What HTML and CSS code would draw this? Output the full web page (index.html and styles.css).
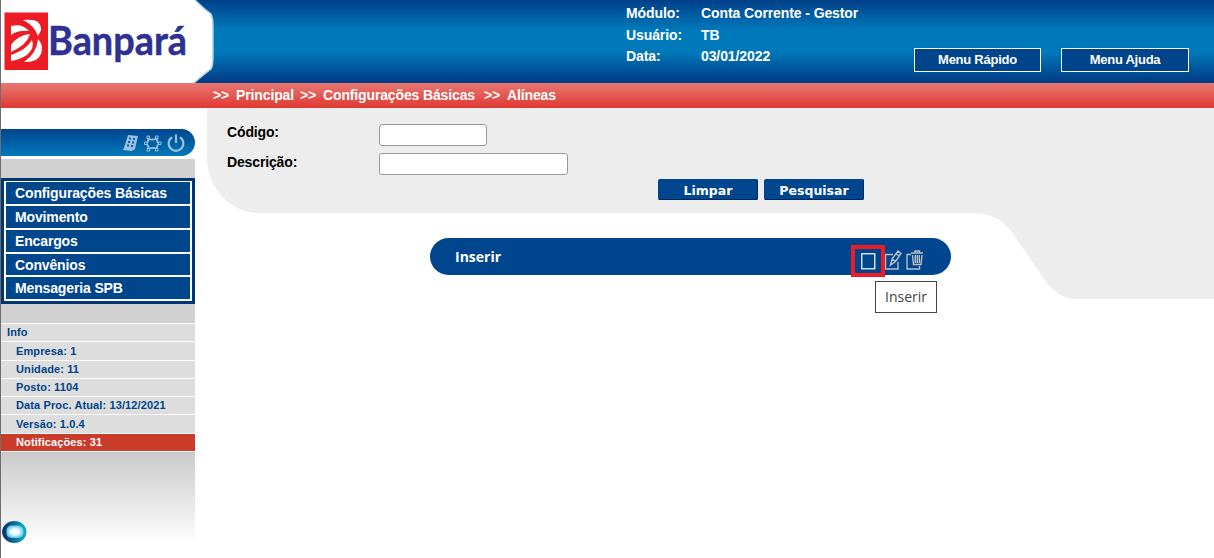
FILE: index.html
```html
<!DOCTYPE html>
<html lang="pt-BR">
<head>
<meta charset="utf-8">
<title>Banpará - Conta Corrente</title>
<link rel="stylesheet" href="styles.css">
</head>
<body>
<div class="page">
  <header class="header">
    <svg class="logo" width="216" height="83" viewBox="0 0 216 83">
      <path d="M0 0H195Q203 8 211 14Q213 18 213 26V57Q213 66 211 69Q203 75 194 83H0Z" fill="#fff"/>
      <path d="M195 0Q203 8 211 14Q213 18 213 26V57Q213 66 211 69Q203 75 194 83" fill="none" stroke="#a9cfea" stroke-width="1.500"/>
      <rect x="4.500" y="12.500" width="43.500" height="57.500" fill="#ed1c24"/>
      <path d="M23 20Q34 19 38 22Q44 28 38 36Q34 25 23 20Z" fill="#fff"/>
      <path d="M11 26Q22 23 29 31Q18 30 11 35Z" fill="#fff"/>
      <path d="M11 45Q18 35 30 34Q27 45 11 52Z" fill="#fff"/>
      <path d="M11 55Q26 50 32 40Q35 48 27 55Q19 60 11 61Z" fill="#fff"/>
      <path d="M38 39Q44 45 41 54Q37 63 24 62Q37 53 38 39Z" fill="#fff"/>
      <text class="logo-text" x="48" y="54.800" textLength="139" lengthAdjust="spacingAndGlyphs">Banpará</text>
    </svg>
    <dl class="session">
      <dt>Módulo:</dt><dd>Conta Corrente - Gestor</dd>
      <dt>Usuário:</dt><dd>TB</dd>
      <dt>Data:</dt><dd>03/01/2022</dd>
    </dl>
    <nav class="quick">
      <a class="quick-link">Menu Rápido</a>
      <a class="quick-link quick-help">Menu Ajuda</a>
    </nav>
  </header>
  <nav class="crumbs"><span>&gt;&gt;</span><span class="c-main">Principal</span><span class="c-sep">&gt;&gt;</span><span class="c-item">Configurações Básicas</span><span class="c-sep2">&gt;&gt;</span><span class="c-item">Alíneas</span></nav>
  <div class="body">
    <aside class="sidebar">
      <div class="toolbar">
        <svg width="64" height="21" viewBox="0 0 64 21" fill="none" stroke="#9bbfe0">
          <path d="M6 2L16 3L13 16L10 18L1 17L3 12Z" fill="#9bbfe0" stroke="none"/>
          <path d="M7 5.500h2M11 6h2M6 9h2M10 9.500h2M5 12.500h2M9 13h2" stroke="#0a62a8" stroke-width="1.800"/>
          <path d="M26 6Q30.500 7.500 35 5.500Q34.500 9 37 10.500Q34.500 12.500 35 15.500Q30.500 14 26.500 16Q27 12.500 24 10.500Q27 9 26 6Z" stroke-width="1.600"/>
          <path d="M25 3h2.500v2.500h-2.500zM33.500 3h2.500v2.500h-2.500zM22.500 9h2.500v2.500h-2.500zM36.500 9h2.500v2.500h-2.500zM25 15.500h2.500v2.500h-2.500zM33.500 15.500h2.500v2.500h-2.500z" fill="#0766aa" stroke-width="1"/>
          <path d="M50 4.200A7.400 7.400 0 1 0 58 4.200M54 1.500V10" stroke-width="2.200"/>
        </svg>
      </div>
      <div class="band"></div>
      <nav class="menu">
        <a>Configurações Básicas</a>
        <a>Movimento</a>
        <a>Encargos</a>
        <a>Convênios</a>
        <a>Mensageria SPB</a>
      </nav>
      <div class="band"></div>
      <ul class="info">
        <li class="info-title">Info</li>
        <li class="low">Empresa: 1</li>
        <li>Unidade: 11</li>
        <li>Posto: 1104</li>
        <li>Data Proc. Atual: 13/12/2021</li>
        <li class="low">Versão: 1.0.4</li>
        <li class="alert">Notificações: 31</li>
      </ul>
      <div class="fade">
        <svg width="26" height="26" viewBox="0 0 26 26">
          <defs>
            <linearGradient id="orb"><stop offset="0" stop-color="#0a2a66"/><stop offset=".5" stop-color="#08709f"/><stop offset="1" stop-color="#0db2cf"/></linearGradient>
            <radialGradient id="glow"><stop offset="0" stop-color="#fff"/><stop offset=".5" stop-color="#e6f8fb"/><stop offset="1" stop-color="#63cbe0"/></radialGradient>
          </defs>
          <ellipse cx="13.300" cy="12" rx="12.200" ry="11" fill="url(#orb)"/>
          <rect x="5.500" y="5.500" width="17" height="12.500" rx="5" fill="url(#glow)"/>
        </svg>
      </div>
    </aside>
    <main class="main">
      <svg class="shape" width="1007" height="191" viewBox="0 0 1007 191"><path d="M0 0H1007V191H865Q848 188 835 168L805 124Q790 105 768 105H52C22 105 0 78 0 50Z" fill="#ededed"/></svg>
      <form class="search">
        <label>Código:</label><input class="in-code" type="text">
        <label class="second">Descrição:</label><input class="in-desc" type="text">
      </form>
      <div class="actions"><button type="button">Limpar</button><button type="button">Pesquisar</button></div>
      <div class="insert">
        <span>Inserir</span>
        <svg class="tools" width="76" height="32" viewBox="0 0 76 32" fill="none" stroke="#b9bec9" stroke-width="1.400">
          <path d="M42 9.500H34.500V24H47V17M39.500 20L41 14L47 6L50 8.500L44.500 16.500ZM41 14L44.500 16.500M45 8.500L48 11"/>
          <path d="M60 9.500H56V24H68.500V21"/>
          <path d="M60 8H72M64 8V6H68.500V8M61.500 10L62.500 19.500H70L71 10M64.300 10V18M66.300 10V18M68.300 10V18"/>
          <rect x="2" y="2" width="30" height="28" stroke="#ed1c24" stroke-width="4"/>
          <rect x="10.750" y="8.750" width="13" height="15" stroke="#e2e5ec"/>
        </svg>
        <div class="tip">Inserir</div>
      </div>
    </main>
  </div>
</div>
</body>
</html>
```
FILE: styles.css
```css
* { box-sizing: border-box; }
body { margin: 0; background: #fff; font: bold 14px/20px "Liberation Sans", Arial, sans-serif; }
.page { width: 1214px; height: 558px; overflow: hidden; border-left: 1px solid #6d6d6d; }
.header { display: flex; height: 83px; margin-left: -1px; color: #fff; background: linear-gradient(#003f88 0, #0079ba 36%, #0079ba 62%, #003f88 97%); }
.logo { flex: none; }
.logo-text { font: bold 40.5px Lato, sans-serif; fill: #2e3192; stroke: #2e3192; stroke-width: 0.5px; }
.session { display: grid; grid-template-columns: 75px 175px; grid-template-rows: 22px 21px 21px; margin: 3px 0 0 410px; align-content: start; letter-spacing: -0.1px; }
.session dd { margin: 0; }
.quick { display: flex; gap: 20px; margin: 48px 0 0 38px; }
.quick-link { width: 127px; height: 24px; border: 1px solid #fff; background: #00458c; text-align: center; font-size: 13px; line-height: 21px; letter-spacing: -0.25px; }
.quick-help { width: 128px; }
.crumbs { display: flex; height: 25px; padding-left: 212px; color: #fff; line-height: 24px; letter-spacing: -0.14px; background: linear-gradient(#e87772, #df3931); }
.c-main { margin-left: 7px; }
.c-sep { margin-left: 6px; }
.c-item { margin-left: 7px; }
.c-sep2 { margin-left: 9px; }
.body { display: grid; grid-template-columns: 194px 1007px; column-gap: 12px; }
.toolbar { display: flex; justify-content: flex-end; height: 27px; margin: 21px 0 3px; padding: 4px 9px 0 0; border-radius: 0 14px 14px 0; background: linear-gradient(#00458f, #0078b9); }
.band { height: 19px; background: #d1d1d1; }
.menu { display: grid; grid-template-rows: 22px 22px 22px 21px 22px; gap: 2px; height: 126px; padding: 4px 5px; color: #fff; letter-spacing: -0.14px; background: linear-gradient(#fff, #fff) 3px 3px / 188px 120px no-repeat #003673; }
.menu a { padding-left: 9px; line-height: 22px; background: #00468d; }
.info { margin: 0; padding: 0; list-style: none; font-size: 11px; color: #00438b; letter-spacing: 0.12px; }
.info li { height: 18.25px; padding-left: 15px; border-top: 1px solid #fff; line-height: 17.5px; background: #ddd; }
.info .low { line-height: 19px; }
.info .info-title { padding-left: 6px; }
.info .alert { color: #fff; background: #cb3b29; }
.fade { height: 90px; border-top: 1px solid #fff; padding-top: 68px; background: linear-gradient(#cacaca, #fdfdfd); }
.fade svg { display: block; }
.main { position: relative; }
.shape { position: absolute; left: 0; top: 0; z-index: -1; }
.search { display: grid; grid-template-columns: 151px 200px; grid-template-rows: 22px 22px; row-gap: 7px; padding: 16px 0 0 20px; letter-spacing: -0.14px; }
.search label { margin-top: -2px; }
.search .second { margin-top: -1px; }
.search input { height: 22px; border: 1px solid #999; border-radius: 3px; background: #fff; }
.in-code { width: 108px; margin-left: 1px; }
.in-desc { width: 189px; margin-left: 1px; }
.actions { display: flex; gap: 6px; margin: 4px 0 0 451px; }
.actions button { width: 100px; height: 21px; padding: 2px 0 0; border: 0; border-radius: 2px; box-shadow: inset -1px -1px #00295a; color: #fff; background: #00468f; font: bold 12.5px/19px "DejaVu Sans", Verdana, sans-serif; }
.insert { position: relative; display: flex; justify-content: space-between; width: 521px; height: 37px; margin: 38px 0 0 223px; padding: 7px 24px 0 25px; border-radius: 19px; color: #fff; background: #00468e; font: bold 14px/24px "Open Sans", sans-serif; }
.tools { flex: none; }
.tip { position: absolute; left: 445px; top: 43px; width: 62px; height: 32px; border: 1px solid #444; color: #444; background: #fff; text-align: center; font: 14px/30px "Open Sans", sans-serif; }
```
